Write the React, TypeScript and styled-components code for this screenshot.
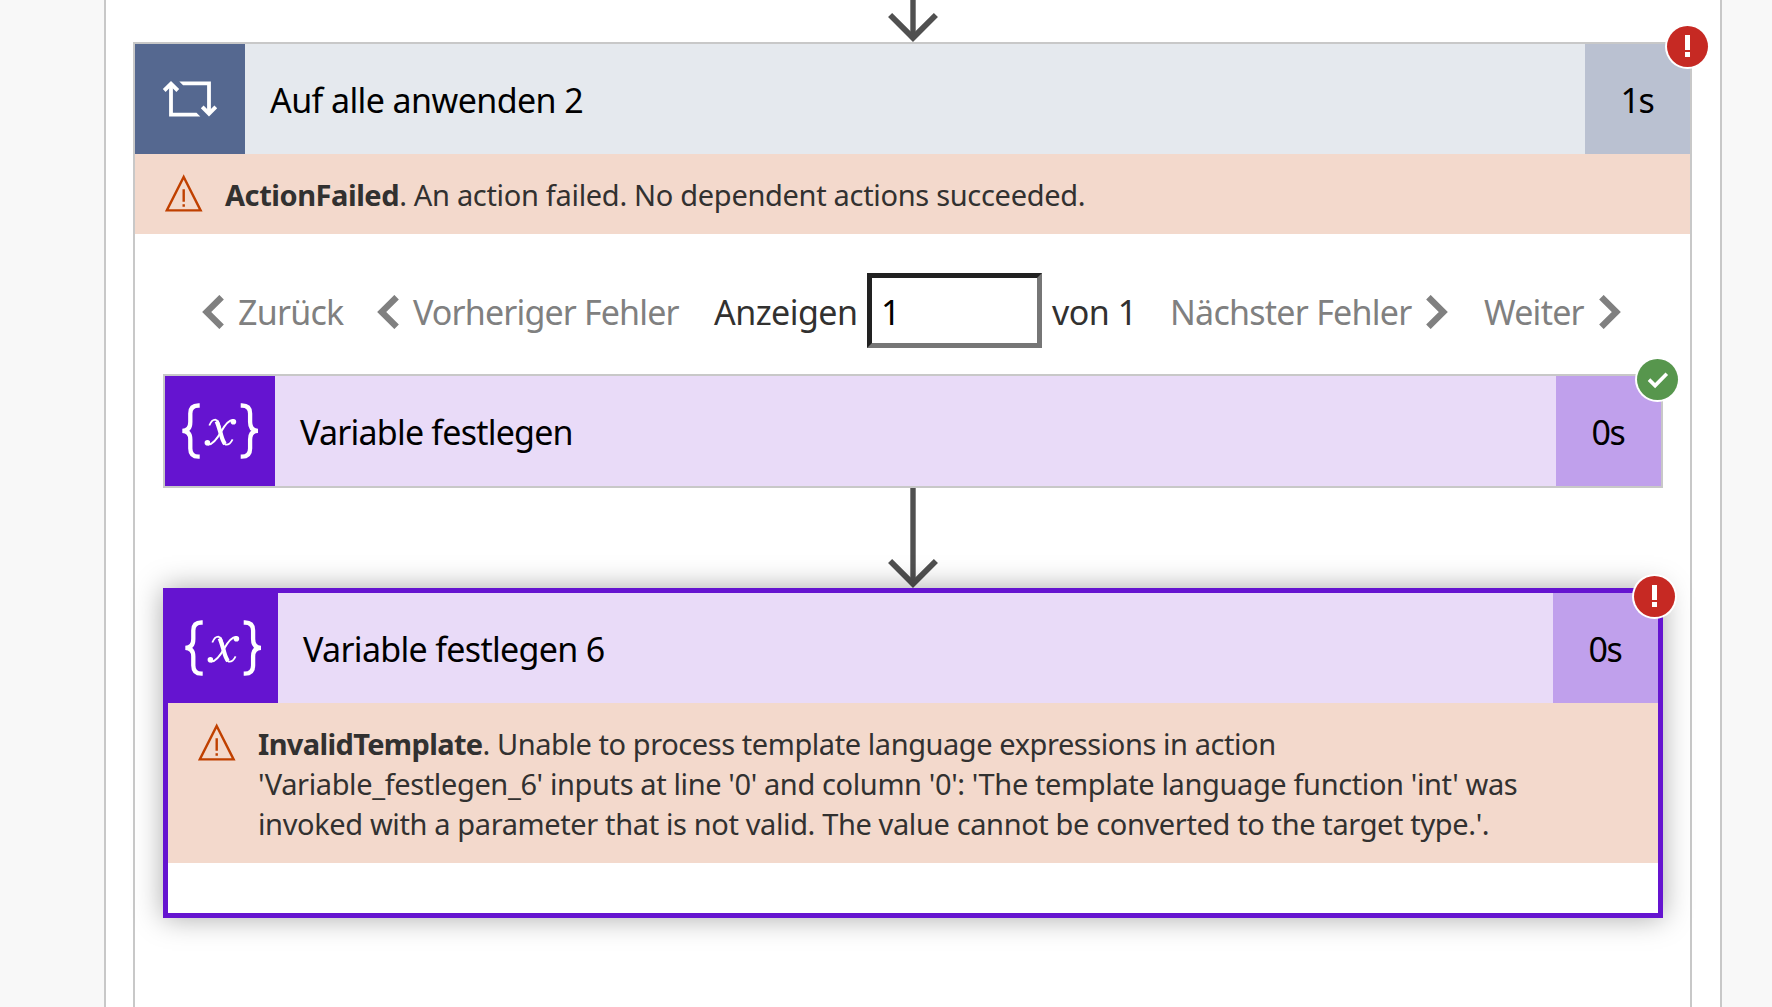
import React from "react";
import styled, { createGlobalStyle } from "styled-components";

const GlobalStyle = createGlobalStyle`
  * { box-sizing: border-box; }
  body {
    margin: 0;
    background: #f8f8f8;
    font-family: "Noto Sans", "Open Sans", sans-serif;
    font-weight: 400;
    overflow: hidden;
  }
`;

const BORDER = "#c8c8c8";

const Page = styled.div`
  height: 1007px;
  display: flex;
  padding-left: 104px;
`;

const Scope = styled.main`
  width: 1618px;
  height: 1007px;
  overflow: hidden;
  display: flex;
  flex-direction: column;
  padding: 0 28px 0 27px;
  background: #fff;
  border: solid ${BORDER};
  border-width: 0 2px;
`;

const Card = styled.section<{ $selected?: boolean; $open?: boolean }>`
  position: relative;
  display: flex;
  flex-direction: column;
  background: #fff;
  border: ${(p) => (p.$selected ? "5px solid #6514d0" : `2px solid ${BORDER}`)};
  box-shadow: ${(p) => (p.$selected ? "0 0 27px rgba(0, 0, 0, 0.34)" : "none")};
  ${(p) => p.$open && "flex: 1 0 auto; border-bottom: none;"}
`;

const Header = styled.header<{ $bg: string }>`
  display: flex;
  height: 110px;
  background: ${(p) => p.$bg};
`;

const IconTile = styled.div<{ $bg: string }>`
  width: 110px;
  height: 110px;
  background: ${(p) => p.$bg};
`;

const Title = styled.h2<{ $spacing: number }>`
  flex: 1;
  margin: 0;
  padding: 2px 0 0 25px;
  font-size: 34px;
  font-weight: inherit;
  line-height: 108px;
  letter-spacing: ${(p) => p.$spacing}px;
  color: #000;
`;

const Duration = styled.div<{ $bg: string }>`
  width: 105px;
  padding: 2px 1px 0 0;
  background: ${(p) => p.$bg};
  font-size: 34px;
  line-height: 108px;
  letter-spacing: -1.4px;
  text-align: center;
  color: #000;
`;

const Badge = styled.span<{ $tone: string; $top: number; $right: number }>`
  position: absolute;
  top: ${(p) => p.$top}px;
  right: ${(p) => p.$right}px;
  width: 41px;
  height: 41px;
  border-radius: 50%;
  background: ${(p) => p.$tone};
  box-shadow: 0 0 0 2px #fff;
`;

const ErrorBar = styled.div`
  display: flex;
  gap: 22px;
  padding: 20px 30px;
  background: #f3d9cc;
`;

const ErrorText = styled.p`
  margin: 0;
  padding-top: 1px;
  margin-bottom: -1px;
  font-size: 29px;
  line-height: 40px;
  color: #323130;
  white-space: nowrap;
`;

const Line = styled.span<{ $spacing: number }>`
  display: block;
  letter-spacing: ${(p) => p.$spacing}px;
`;

const Code = styled.strong<{ $spacing: number }>`
  font-weight: 700;
  letter-spacing: ${(p) => p.$spacing}px;
`;

const Pager = styled.nav`
  display: grid;
  grid-template-columns: 175px 337px 153px 185px 118px 314px 137px;
  align-items: center;
  height: 140px;
  padding: 39px 0 26px 67px;
`;

const PagerText = styled.span<{ $spacing: number }>`
  padding-top: 3px;
  font-size: 34px;
  line-height: 72px;
  letter-spacing: ${(p) => p.$spacing}px;
  color: #323130;
  white-space: nowrap;
`;

const PagerButton = styled.button<{ $spacing: number; $width?: number }>`
  display: flex;
  align-items: center;
  justify-content: ${(p) => (p.$width ? "space-between" : "flex-start")};
  gap: 14px;
  width: ${(p) => (p.$width ? `${p.$width}px` : "auto")};
  padding: 3px 0 0;
  border: 0;
  background: none;
  font-family: inherit;
  font-size: 34px;
  font-weight: inherit;
  line-height: 72px;
  letter-spacing: ${(p) => p.$spacing}px;
  color: #808080;
  white-space: nowrap;
`;

const PageInput = styled.input`
  width: 175px;
  height: 75px;
  padding: 3px 0 0 9px;
  border: 5px solid;
  border-color: #212121 #767676 #767676 #212121;
  border-radius: 0;
  outline: none;
  background: #fff;
  font-family: inherit;
  font-size: 34px;
  font-weight: inherit;
  color: #000;
`;

const Children = styled.div`
  display: flex;
  flex-direction: column;
  padding: 0 27px 0 28px;
`;

const Connector = styled.div<{ $height: number; $indent: number }>`
  display: flex;
  justify-content: center;
  height: ${(p) => p.$height}px;
  padding-left: ${(p) => p.$indent}px;
`;

const EmptyBody = styled.div`
  height: 50px;
`;

const Svg = styled.svg`
  display: block;
  flex: none;
`;

function Arrow({ height, indent = 0 }: { height: number; indent?: number }) {
  return (
    <Connector $height={height} $indent={indent}>
      <Svg width="50" height={height} fill="none" stroke="#505050">
        <path d={`M25 0V${height - 4}`} strokeWidth="5.4" />
        <path
          d={`M2.1 ${height - 27}L25 ${height - 4.2}L47.9 ${height - 27}`}
          strokeWidth="5.8"
        />
      </Svg>
    </Connector>
  );
}

function LoopIcon() {
  return (
    <Svg width="110" height="110" fill="#fff">
      <path d="M34.1 41H37.9V68.8H61.5L65.3 72.6H34.1Z" />
      <path d="M44.3 37.4H75.9V69H72.1V41.2H48.1Z" />
      <path
        d="M29.2 46.5L36 39.8L42.8 46.5M67.2 62.9L74 69.7L80.8 62.9"
        fill="none"
        stroke="#fff"
        strokeWidth="3.9"
      />
    </Svg>
  );
}

function VariableIcon() {
  return (
    <Svg width="110" height="110" fill="none" stroke="#fff">
      <path
        strokeWidth="4.3"
        d="M34.7 29.5H33.5C27.8 29.5 25.3 32 25.3 37.5V46C25.3 51.5 22.8 54.8 17.3 54.8C22.8 54.8 25.3 58 25.3 63.5V72.5C25.3 78 27.8 80.7 33.5 80.7H34.7"
      />
      <path
        strokeWidth="4.3"
        d="M75.7 29.5H76.9C82.6 29.5 85.1 32 85.1 37.5V46C85.1 51.5 87.6 54.8 93 54.8C87.6 54.8 85.1 58 85.1 63.5V72.5C85.1 78 82.6 80.7 76.9 80.7H75.7"
      />
      <path
        strokeWidth="1.8"
        d="M44.3 49.5C46 45.3 48 43.6 50.3 43.6C53.5 43.8 54.3 49 56 56C57.5 62 58.3 68.7 61.5 68.7C64 68.7 66 66.5 67.6 63.3"
      />
      <path strokeWidth="4.2" d="M51.6 45.2C53.5 49 54.6 54 56 58.5C57.1 62.5 57.9 65.5 60 67.8" />
      <path
        strokeWidth="2"
        d="M69 44C64.5 43 60.2 48.2 56.2 55.5C52 63 47.5 69.5 42.5 68.3"
      />
      <circle cx="68.4" cy="45.8" r="2.8" fill="#fff" stroke="none" />
      <circle cx="42.4" cy="66.7" r="2.8" fill="#fff" stroke="none" />
    </Svg>
  );
}

function WarningIcon() {
  return (
    <Svg width="38" height="39" fill="none" stroke="#c04000">
      <path d="M18.7 3L35.6 36.4H1.8Z" strokeWidth="2.4" />
      <path d="M18.7 15.3V27.8M18.7 30.3V32.8" strokeWidth="2.4" />
    </Svg>
  );
}

function Chevron({ right }: { right?: boolean }) {
  return (
    <Svg width="22" height="34" fill="none" stroke="#808080" strokeWidth="6.4">
      <path d={right ? "M2.4 2.2L17.3 17L2.4 31.8" : "M19.6 2.2L4.7 17L19.6 31.8"} />
    </Svg>
  );
}

function FailedBadge({ top, right }: { top: number; right: number }) {
  return (
    <Badge $tone="#c62923" $top={top} $right={right}>
      <Svg width="41" height="41" fill="#fff">
        <path d="M18 9H23V24H18ZM18 26H23V31H18Z" />
      </Svg>
    </Badge>
  );
}

function SucceededBadge({ top, right }: { top: number; right: number }) {
  return (
    <Badge $tone="#57964d" $top={top} $right={right}>
      <Svg width="41" height="41" fill="none" stroke="#fff" strokeWidth="3.6">
        <path d="M12 20.6L18.1 26.6L29.8 14.8" />
      </Svg>
    </Badge>
  );
}

export default function App() {
  return (
    <>
      <GlobalStyle />
      <Page>
        <Scope>
          <Arrow height={42} indent={1} />
          <Card $open>
            <Header $bg="#e5e9ee">
              <IconTile $bg="#556890">
                <LoopIcon />
              </IconTile>
              <Title $spacing={-0.59}>Auf alle anwenden 2</Title>
              <Duration $bg="#bac1d1">1s</Duration>
            </Header>
            <FailedBadge top={-18} right={-18} />
            <ErrorBar>
              <WarningIcon />
              <ErrorText>
                <Line $spacing={-0.31}>
                  <Code $spacing={-0.45}>ActionFailed</Code>. An action failed. No dependent actions
                  succeeded.
                </Line>
              </ErrorText>
            </ErrorBar>
            <Pager>
              <PagerButton $spacing={-0.75}>
                <Chevron />
                Zurück
              </PagerButton>
              <PagerButton $spacing={-0.85}>
                <Chevron />
                Vorheriger Fehler
              </PagerButton>
              <PagerText $spacing={-0.55}>Anzeigen</PagerText>
              <PageInput defaultValue="1" />
              <PagerText $spacing={-0.5}>von 1</PagerText>
              <PagerButton $spacing={-0.74} $width={278}>
                Nächster Fehler
                <Chevron right />
              </PagerButton>
              <PagerButton $spacing={-0.75} $width={137}>
                Weiter
                <Chevron right />
              </PagerButton>
            </Pager>
            <Children>
              <Card>
                <Header $bg="#e9dbf8">
                  <IconTile $bg="#6514d0">
                    <VariableIcon />
                  </IconTile>
                  <Title $spacing={-0.78}>Variable festlegen</Title>
                  <Duration $bg="#c0a0ec">0s</Duration>
                </Header>
                <SucceededBadge top={-17} right={-17} />
              </Card>
              <Arrow height={100} />
              <Card $selected>
                <Header $bg="#e9dbf8">
                  <IconTile $bg="#6514d0">
                    <VariableIcon />
                  </IconTile>
                  <Title $spacing={-0.68}>Variable festlegen 6</Title>
                  <Duration $bg="#c0a0ec">0s</Duration>
                </Header>
                <FailedBadge top={-17} right={-17} />
                <ErrorBar>
                  <WarningIcon />
                  <ErrorText>
                    <Line $spacing={-0.43}>
                      <Code $spacing={-0.65}>InvalidTemplate</Code>. Unable to process template
                      language expressions in action
                    </Line>
                    <Line $spacing={-0.38}>
                      'Variable_festlegen_6' inputs at line '0' and column '0': 'The template
                      language function 'int' was
                    </Line>
                    <Line $spacing={-0.375}>
                      invoked with a parameter that is not valid. The value cannot be converted to
                      the target type.'.
                    </Line>
                  </ErrorText>
                </ErrorBar>
                <EmptyBody />
              </Card>
            </Children>
          </Card>
        </Scope>
      </Page>
    </>
  );
}
